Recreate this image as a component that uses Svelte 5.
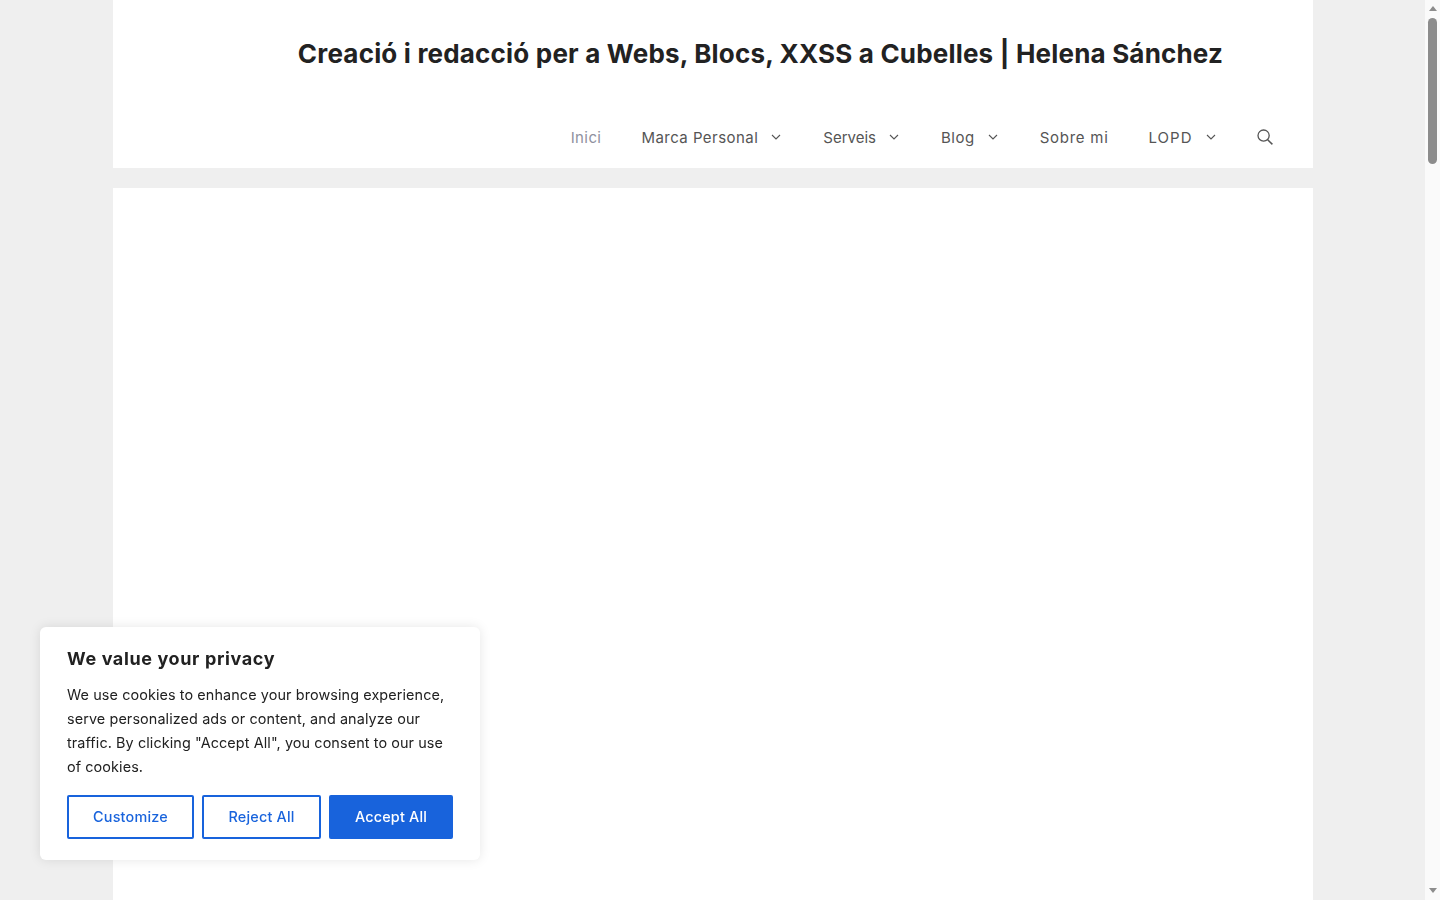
<script lang="ts">
  const menu = [
    { label: 'Inici', current: true, spacing: 0.4 },
    { label: 'Marca Personal', sub: true, spacing: 0.46 },
    { label: 'Serveis', sub: true, spacing: 0 },
    { label: 'Blog', sub: true, spacing: 0.5 },
    { label: 'Sobre mi', spacing: 0.75 },
    { label: 'LOPD', sub: true, spacing: 1 },
  ];
</script>

<div class="page">
  <main class="viewport">
    <div class="container">
      <header class="site-header">
        <div class="branding">
          <h1>Creació i redacció per a Webs, Blocs, XXSS a Cubelles | Helena Sánchez</h1>
        </div>
        <nav class="menu">
          {#each menu as item}
            <a href="#top" class="item" class:current={item.current}>
              <span style="letter-spacing: {item.spacing}px">{item.label}</span>
              {#if item.sub}
                <svg class="chevron" viewBox="0 0 10 6" width="10" height="6" aria-hidden="true">
                  <path d="M1 1l4 4 4-4" fill="none" stroke="currentColor" stroke-width="1.1" />
                </svg>
              {/if}
            </a>
          {/each}
          <button class="search" aria-label="Cerca">
            <svg viewBox="0 0 16 16" width="16" height="16" aria-hidden="true">
              <circle cx="6.6" cy="6.6" r="5.6" fill="none" stroke="currentColor" stroke-width="1.3" />
              <path d="M10.7 10.7l4.7 4.7" fill="none" stroke="currentColor" stroke-width="1.5" />
            </svg>
          </button>
        </nav>
      </header>
      <section class="content"></section>
    </div>
  </main>

  <div class="scrollbar">
    <span class="arrow up"></span>
    <div class="track"><div class="thumb"></div></div>
    <span class="arrow down"></span>
  </div>

  <aside class="cookie">
    <p class="cookie-title">We value your privacy</p>
    <p class="cookie-text">
      We use cookies to enhance your browsing experience, serve personalized ads or content, and analyze our traffic. By clicking "Accept All", you consent to our use of cookies.
    </p>
    <div class="cookie-actions">
      <button class="btn outline customize">Customize</button>
      <button class="btn outline reject">Reject All</button>
      <button class="btn solid accept">Accept All</button>
    </div>
  </aside>
</div>

<style>
  :global(body) {
    margin: 0;
    background: #efefef;
    font-family: Inter, "Open Sans", "Liberation Sans", sans-serif;
    overflow: hidden;
  }

  .page {
    display: flex;
    height: 100vh;
    overflow: hidden;
  }

  .viewport {
    flex: 1;
    min-width: 0;
  }

  .container {
    width: 1200px;
    margin: 0 auto;
  }

  .site-header {
    background: #fff;
    height: 168px;
    display: flex;
    flex-direction: column;
  }

  .branding {
    height: 107px;
    padding: 36px 0 0 96px;
    box-sizing: border-box;
    display: flex;
    justify-content: center;
  }

  h1 {
    margin: 0;
    font-size: 26px;
    line-height: 36px;
    font-weight: 700;
    letter-spacing: 0.19px;
    color: #222;
    white-space: nowrap;
  }

  .menu {
    display: flex;
    justify-content: flex-end;
    align-items: center;
    height: 60px;
    padding-right: 20px;
  }

  .item {
    display: flex;
    align-items: center;
    height: 60px;
    padding: 0 20px;
    font-size: 15px;
    color: #555;
    text-decoration: none;
    white-space: nowrap;
  }

  .item.current {
    color: #8f919e;
  }

  .chevron {
    margin-left: 13px;
    margin-right: 2px;
  }

  .search {
    display: flex;
    align-items: center;
    height: 60px;
    padding: 0 20px 0 19px;
    background: none;
    border: 0;
    color: #555;
  }

  .content {
    margin-top: 20px;
    height: 900px;
    background: #fff;
  }

  .scrollbar {
    width: 15px;
    flex: none;
    background: #fafafa;
    display: flex;
    flex-direction: column;
    align-items: center;
  }

  .arrow {
    flex: none;
    width: 0;
    height: 0;
    border-left: 4.5px solid transparent;
    border-right: 4.5px solid transparent;
  }

  .arrow.up {
    margin-top: 6px;
    border-bottom: 5px solid #8c8c8c;
  }

  .arrow.down {
    margin-bottom: 7px;
    border-top: 5px solid #8c8c8c;
  }

  .track {
    flex: 1;
    width: 100%;
    display: flex;
    justify-content: center;
    padding-top: 7px;
  }

  .thumb {
    width: 9px;
    height: 146px;
    border-radius: 5px;
    background: #8c8c8c;
  }

  .cookie {
    position: fixed;
    left: 40px;
    bottom: 40px;
    width: 440px;
    height: 233px;
    box-sizing: border-box;
    padding: 20px 27px 0;
    background: #fff;
    border-radius: 6px;
    box-shadow: 0 0 12px rgba(0, 0, 0, 0.1);
    color: #212121;
  }

  .cookie-title {
    margin: 0;
    font-size: 18px;
    line-height: 24px;
    font-weight: 700;
    letter-spacing: 0.62px;
  }

  .cookie-text {
    margin: 12px 0 0;
    font-size: 14.4px;
    line-height: 24px;
    letter-spacing: 0.1px;
    color: #212121;
  }

  .cookie-actions {
    display: flex;
    gap: 8px;
    margin-top: 16px;
  }

  .btn {
    height: 44px;
    box-sizing: border-box;
    padding: 0 0 2px;
    border: 2px solid #1863dc;
    border-radius: 2px;
    font: inherit;
    font-size: 14.4px;
    font-weight: 500;
    letter-spacing: 0.2px;
  }

  .outline {
    background: #fff;
    color: #1863dc;
  }

  .solid {
    background: #1863dc;
    color: #fff;
  }

  .customize { width: 127px; }
  .reject { width: 119px; }
  .accept { width: 124px; }
</style>
